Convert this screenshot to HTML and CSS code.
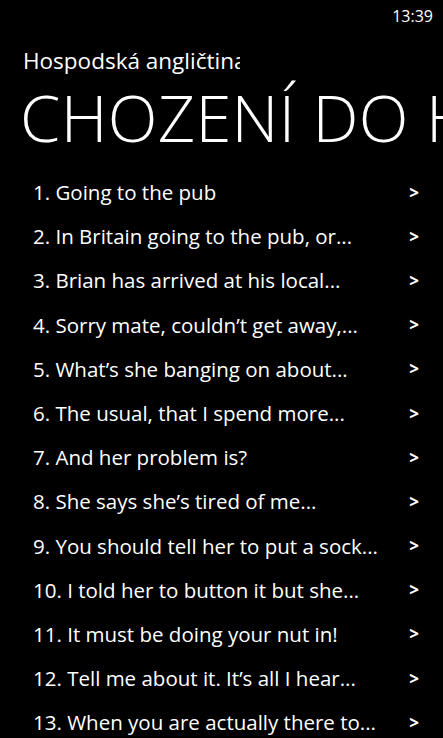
FILE: index.html
```html
<!DOCTYPE html>
<html>
<head>
<meta charset="utf-8">
<link rel="stylesheet" href="styles.css">
</head>
<body>
<div class="screen">
  <div class="status"><span class="time">13:39</span></div>
  <div class="app-title">Hospodská angličtina</div>
  <div class="page-title">CHOZENÍ DO HOSPODY</div>
  <ul class="list">
    <li class="row"><span class="label">1. Going to the pub</span><span class="arrow">&gt;</span></li>
    <li class="row"><span class="label">2. In Britain going to the pub, or...</span><span class="arrow">&gt;</span></li>
    <li class="row"><span class="label">3. Brian has arrived at his local...</span><span class="arrow">&gt;</span></li>
    <li class="row"><span class="label">4. Sorry mate, couldn’t get away,...</span><span class="arrow">&gt;</span></li>
    <li class="row"><span class="label">5. What’s she banging on about...</span><span class="arrow">&gt;</span></li>
    <li class="row"><span class="label">6. The usual, that I spend more...</span><span class="arrow">&gt;</span></li>
    <li class="row"><span class="label">7. And her problem is?</span><span class="arrow">&gt;</span></li>
    <li class="row"><span class="label">8. She says she’s tired of me...</span><span class="arrow">&gt;</span></li>
    <li class="row"><span class="label">9. You should tell her to put a sock...</span><span class="arrow">&gt;</span></li>
    <li class="row"><span class="label">10. I told her to button it but she...</span><span class="arrow">&gt;</span></li>
    <li class="row"><span class="label">11. It must be doing your nut in!</span><span class="arrow">&gt;</span></li>
    <li class="row"><span class="label">12. Tell me about it. It’s all I hear...</span><span class="arrow">&gt;</span></li>
    <li class="row"><span class="label">13. When you are actually there to...</span><span class="arrow">&gt;</span></li>
  </ul>
</div>
</body>
</html>
```

FILE: styles.css
```css
html, body {
  margin: 0;
  padding: 0;
  background: #000;
}
.screen {
  width: 443px;
  height: 738px;
  overflow: hidden;
  background: #000;
  color: #fff;
  font-family: "Open Sans", "Noto Sans", sans-serif;
}
.status {
  height: 32px;
  display: flex;
  justify-content: flex-end;
  align-items: center;
  padding-right: 10px;
}
.time {
  font-size: 16px;
  line-height: 1;
}
.app-title {
  width: 217px;
  margin-left: 23px;
  margin-top: 15px;
  font-size: 22.5px;
  line-height: 28px;
  white-space: nowrap;
  overflow: hidden;
}
.page-title {
  margin-left: 20px;
  margin-top: 2px;
  font-size: 65px;
  font-weight: 300;
  letter-spacing: 0.3px;
  line-height: 80px;
  white-space: nowrap;
  overflow: hidden;
}
.list {
  list-style: none;
  margin: 0;
  padding: 0;
  margin-top: 13px;
}
.row {
  height: 44.2px;
  display: flex;
  align-items: center;
  justify-content: space-between;
  padding-left: 33px;
  padding-right: 24px;
  font-size: 20.5px;
}
.label {
  white-space: nowrap;
}
.arrow {
  font-weight: 700;
  font-size: 17px;
}
```
